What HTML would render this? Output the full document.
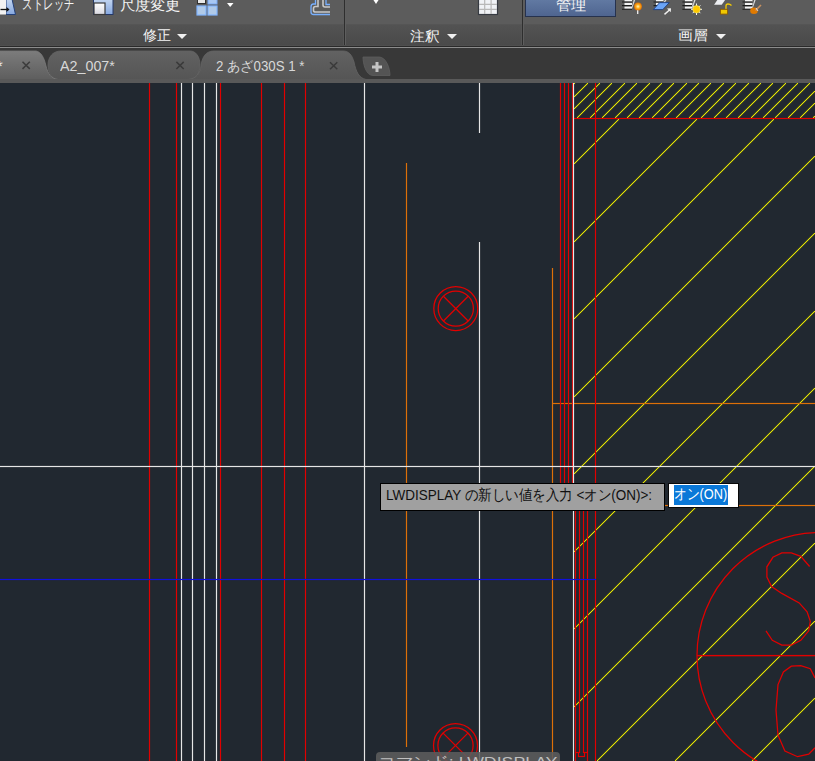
<!DOCTYPE html>
<html><head><meta charset="utf-8"><style>
*{margin:0;padding:0;box-sizing:border-box}
html,body{width:815px;height:761px;overflow:hidden;background:#212830;font-family:"Liberation Sans",sans-serif}
.abs{position:absolute}
#ribbon{position:absolute;left:0;top:0;width:815px;height:45px;background:#5c5c5c}
#rtitle{position:absolute;left:0;top:24px;width:815px;height:21px;background:linear-gradient(#535353,#4a4a4a)}
.tb{position:absolute;top:24px;height:21px;border:1px solid #555;border-bottom:none}
.sep{position:absolute;top:0;width:1px;height:45px;background:#2e2e2e}
.sepl{position:absolute;top:23px;width:1px;height:22px;background:#5e5e5e}
.rt{position:absolute;color:#f0f0f0;font-size:14px;line-height:16px;white-space:nowrap}
.tri{position:absolute;width:0;height:0;border-left:5px solid transparent;border-right:5px solid transparent;border-top:5px solid #f0f0f0}
#tabbar{position:absolute;left:0;top:45px;width:815px;height:38px;background:#383838}
.tt{position:absolute;color:#d6d6d6;font-size:14px;line-height:16px;white-space:nowrap}
.x{position:absolute;color:#2e2e2e;font-size:13px;font-weight:bold;line-height:13px}
#draw{position:absolute;left:0;top:0}
.lb{position:absolute;font-size:14px;line-height:16px;white-space:nowrap;transform-origin:0 0}
#tip{position:absolute;left:380px;top:483px;width:285px;height:28px;background:#a0a0a0;border:1px solid #000;color:#101010;font-size:14px;line-height:26px;padding-left:6px;white-space:nowrap}
#inp{position:absolute;left:668px;top:483px;width:71px;height:25px;background:#fff;border:1px solid #080808}
#sel{position:absolute;left:674px;top:485px;width:54px;height:20px;background:#0a78d8;color:#fff;font-size:14px;line-height:20px;white-space:nowrap;overflow:hidden}
#cmd{position:absolute;left:376px;top:752px;width:184px;height:20px;background:rgba(92,92,92,0.88);border-radius:4px;color:#c8c8c8;font-size:14px;line-height:20px;padding-left:4px;white-space:nowrap}
</style></head><body>
<svg id="draw" width="815" height="761" viewBox="0 0 815 761" shape-rendering="crispEdges" stroke-width="1"><g shape-rendering="geometricPrecision" stroke="#e8e800" stroke-width="2" stroke-opacity="0.28"><line x1="574.20" y1="83.80" x2="574.80" y2="83.20"/><line x1="574.20" y1="96.80" x2="587.80" y2="83.20"/><line x1="574.20" y1="108.80" x2="599.80" y2="83.20"/><line x1="577.20" y1="117.80" x2="611.80" y2="83.20"/><line x1="590.20" y1="117.80" x2="624.80" y2="83.20"/><line x1="602.20" y1="117.80" x2="636.80" y2="83.20"/><line x1="615.20" y1="117.80" x2="649.80" y2="83.20"/><line x1="627.20" y1="117.80" x2="661.80" y2="83.20"/><line x1="639.20" y1="117.80" x2="673.80" y2="83.20"/><line x1="652.20" y1="117.80" x2="686.80" y2="83.20"/><line x1="664.20" y1="117.80" x2="698.80" y2="83.20"/><line x1="676.20" y1="117.80" x2="710.80" y2="83.20"/><line x1="689.20" y1="117.80" x2="723.80" y2="83.20"/><line x1="701.20" y1="117.80" x2="735.80" y2="83.20"/><line x1="714.20" y1="117.80" x2="748.80" y2="83.20"/><line x1="726.20" y1="117.80" x2="760.80" y2="83.20"/><line x1="738.20" y1="117.80" x2="772.80" y2="83.20"/><line x1="751.20" y1="117.80" x2="785.80" y2="83.20"/><line x1="763.20" y1="117.80" x2="797.80" y2="83.20"/><line x1="775.20" y1="117.80" x2="809.80" y2="83.20"/><line x1="788.20" y1="117.80" x2="814.80" y2="91.20"/><line x1="800.20" y1="117.80" x2="814.80" y2="103.20"/><line x1="813.20" y1="117.80" x2="814.80" y2="116.20"/><line x1="574.20" y1="163.80" x2="618.80" y2="119.20"/><line x1="574.20" y1="241.80" x2="696.80" y2="119.20"/><line x1="574.20" y1="318.80" x2="773.80" y2="119.20"/><line x1="574.20" y1="396.80" x2="814.80" y2="156.20"/><line x1="574.20" y1="473.80" x2="814.80" y2="233.20"/><line x1="574.20" y1="551.80" x2="814.80" y2="311.20"/><line x1="574.20" y1="628.80" x2="814.80" y2="388.20"/><line x1="574.20" y1="706.80" x2="814.80" y2="466.20"/><line x1="597.20" y1="760.80" x2="814.80" y2="543.20"/><line x1="675.20" y1="760.80" x2="814.80" y2="621.20"/><line x1="752.20" y1="760.80" x2="814.80" y2="698.20"/></g><line x1="574.20" y1="83.80" x2="574.80" y2="83.20" stroke="#e8e800"/><line x1="574.20" y1="96.80" x2="587.80" y2="83.20" stroke="#e8e800"/><line x1="574.20" y1="108.80" x2="599.80" y2="83.20" stroke="#e8e800"/><line x1="577.20" y1="117.80" x2="611.80" y2="83.20" stroke="#e8e800"/><line x1="590.20" y1="117.80" x2="624.80" y2="83.20" stroke="#e8e800"/><line x1="602.20" y1="117.80" x2="636.80" y2="83.20" stroke="#e8e800"/><line x1="615.20" y1="117.80" x2="649.80" y2="83.20" stroke="#e8e800"/><line x1="627.20" y1="117.80" x2="661.80" y2="83.20" stroke="#e8e800"/><line x1="639.20" y1="117.80" x2="673.80" y2="83.20" stroke="#e8e800"/><line x1="652.20" y1="117.80" x2="686.80" y2="83.20" stroke="#e8e800"/><line x1="664.20" y1="117.80" x2="698.80" y2="83.20" stroke="#e8e800"/><line x1="676.20" y1="117.80" x2="710.80" y2="83.20" stroke="#e8e800"/><line x1="689.20" y1="117.80" x2="723.80" y2="83.20" stroke="#e8e800"/><line x1="701.20" y1="117.80" x2="735.80" y2="83.20" stroke="#e8e800"/><line x1="714.20" y1="117.80" x2="748.80" y2="83.20" stroke="#e8e800"/><line x1="726.20" y1="117.80" x2="760.80" y2="83.20" stroke="#e8e800"/><line x1="738.20" y1="117.80" x2="772.80" y2="83.20" stroke="#e8e800"/><line x1="751.20" y1="117.80" x2="785.80" y2="83.20" stroke="#e8e800"/><line x1="763.20" y1="117.80" x2="797.80" y2="83.20" stroke="#e8e800"/><line x1="775.20" y1="117.80" x2="809.80" y2="83.20" stroke="#e8e800"/><line x1="788.20" y1="117.80" x2="814.80" y2="91.20" stroke="#e8e800"/><line x1="800.20" y1="117.80" x2="814.80" y2="103.20" stroke="#e8e800"/><line x1="813.20" y1="117.80" x2="814.80" y2="116.20" stroke="#e8e800"/><line x1="574.20" y1="163.80" x2="618.80" y2="119.20" stroke="#e8e800"/><line x1="574.20" y1="241.80" x2="696.80" y2="119.20" stroke="#e8e800"/><line x1="574.20" y1="318.80" x2="773.80" y2="119.20" stroke="#e8e800"/><line x1="574.20" y1="396.80" x2="814.80" y2="156.20" stroke="#e8e800"/><line x1="574.20" y1="473.80" x2="814.80" y2="233.20" stroke="#e8e800"/><line x1="574.20" y1="551.80" x2="814.80" y2="311.20" stroke="#e8e800"/><line x1="574.20" y1="628.80" x2="814.80" y2="388.20" stroke="#e8e800"/><line x1="574.20" y1="706.80" x2="814.80" y2="466.20" stroke="#e8e800"/><line x1="597.20" y1="760.80" x2="814.80" y2="543.20" stroke="#e8e800"/><line x1="675.20" y1="760.80" x2="814.80" y2="621.20" stroke="#e8e800"/><line x1="752.20" y1="760.80" x2="814.80" y2="698.20" stroke="#e8e800"/><line x1="406.5" y1="163" x2="406.5" y2="747" stroke="#dd7008" stroke-width="3" stroke-opacity="0.09"/><line x1="406.5" y1="163" x2="406.5" y2="747" stroke="#dd7008"/><line x1="552.5" y1="268" x2="552.5" y2="761" stroke="#dd7008" stroke-width="3" stroke-opacity="0.09"/><line x1="552.5" y1="268" x2="552.5" y2="761" stroke="#dd7008"/><line x1="552" y1="403.5" x2="815" y2="403.5" stroke="#dd7008" stroke-width="3" stroke-opacity="0.09"/><line x1="552" y1="403.5" x2="815" y2="403.5" stroke="#dd7008"/><line x1="552" y1="505.5" x2="815" y2="505.5" stroke="#dd7008" stroke-width="3" stroke-opacity="0.09"/><line x1="552" y1="505.5" x2="815" y2="505.5" stroke="#dd7008"/><line x1="149.5" y1="83" x2="149.5" y2="761" stroke="#e20000" stroke-width="3" stroke-opacity="0.09"/><line x1="149.5" y1="83" x2="149.5" y2="761" stroke="#e20000"/><line x1="176.5" y1="83" x2="176.5" y2="761" stroke="#e20000" stroke-width="3" stroke-opacity="0.09"/><line x1="176.5" y1="83" x2="176.5" y2="761" stroke="#e20000"/><line x1="220.5" y1="83" x2="220.5" y2="761" stroke="#e20000" stroke-width="3" stroke-opacity="0.09"/><line x1="220.5" y1="83" x2="220.5" y2="761" stroke="#e20000"/><line x1="261.5" y1="83" x2="261.5" y2="761" stroke="#e20000" stroke-width="3" stroke-opacity="0.09"/><line x1="261.5" y1="83" x2="261.5" y2="761" stroke="#e20000"/><line x1="284.5" y1="83" x2="284.5" y2="761" stroke="#e20000" stroke-width="3" stroke-opacity="0.09"/><line x1="284.5" y1="83" x2="284.5" y2="761" stroke="#e20000"/><line x1="305.5" y1="83" x2="305.5" y2="761" stroke="#e20000" stroke-width="3" stroke-opacity="0.09"/><line x1="305.5" y1="83" x2="305.5" y2="761" stroke="#e20000"/><line x1="560.5" y1="83" x2="560.5" y2="497" stroke="#e20000" stroke-width="3" stroke-opacity="0.09"/><line x1="560.5" y1="83" x2="560.5" y2="497" stroke="#e20000"/><line x1="564.5" y1="83" x2="564.5" y2="497" stroke="#e20000" stroke-width="3" stroke-opacity="0.09"/><line x1="564.5" y1="83" x2="564.5" y2="497" stroke="#e20000"/><line x1="568.5" y1="83" x2="568.5" y2="497" stroke="#e20000" stroke-width="3" stroke-opacity="0.09"/><line x1="568.5" y1="83" x2="568.5" y2="497" stroke="#e20000"/><line x1="572.5" y1="83" x2="572.5" y2="497" stroke="#e20000" stroke-width="3" stroke-opacity="0.09"/><line x1="572.5" y1="83" x2="572.5" y2="497" stroke="#e20000"/><line x1="575.5" y1="497" x2="575.5" y2="761" stroke="#e20000" stroke-width="3" stroke-opacity="0.09"/><line x1="575.5" y1="497" x2="575.5" y2="761" stroke="#e20000"/><line x1="587.5" y1="497" x2="587.5" y2="761" stroke="#e20000" stroke-width="3" stroke-opacity="0.09"/><line x1="587.5" y1="497" x2="587.5" y2="761" stroke="#e20000"/><line x1="579.5" y1="497" x2="579.5" y2="753" stroke="#e20000" stroke-width="3" stroke-opacity="0.09"/><line x1="579.5" y1="497" x2="579.5" y2="753" stroke="#e20000"/><line x1="583.5" y1="497" x2="583.5" y2="753" stroke="#e20000" stroke-width="3" stroke-opacity="0.09"/><line x1="583.5" y1="497" x2="583.5" y2="753" stroke="#e20000"/><line x1="575" y1="752.5" x2="580" y2="752.5" stroke="#e20000" stroke-width="3" stroke-opacity="0.09"/><line x1="575" y1="752.5" x2="580" y2="752.5" stroke="#e20000"/><line x1="583" y1="752.5" x2="588" y2="752.5" stroke="#e20000" stroke-width="3" stroke-opacity="0.09"/><line x1="583" y1="752.5" x2="588" y2="752.5" stroke="#e20000"/><line x1="578.5" y1="752" x2="578.5" y2="757" stroke="#e20000" stroke-width="3" stroke-opacity="0.09"/><line x1="578.5" y1="752" x2="578.5" y2="757" stroke="#e20000"/><line x1="584.5" y1="752" x2="584.5" y2="757" stroke="#e20000" stroke-width="3" stroke-opacity="0.09"/><line x1="584.5" y1="752" x2="584.5" y2="757" stroke="#e20000"/><line x1="578" y1="756.5" x2="585" y2="756.5" stroke="#e20000" stroke-width="3" stroke-opacity="0.09"/><line x1="578" y1="756.5" x2="585" y2="756.5" stroke="#e20000"/><line x1="595.5" y1="83" x2="595.5" y2="761" stroke="#e20000" stroke-width="3" stroke-opacity="0.09"/><line x1="595.5" y1="83" x2="595.5" y2="761" stroke="#e20000"/><line x1="573" y1="118.5" x2="815" y2="118.5" stroke="#e20000" stroke-width="3" stroke-opacity="0.09"/><line x1="573" y1="118.5" x2="815" y2="118.5" stroke="#e20000"/><line x1="181.5" y1="83" x2="181.5" y2="761" stroke="#e6e6e6" stroke-width="3" stroke-opacity="0.09"/><line x1="181.5" y1="83" x2="181.5" y2="761" stroke="#e6e6e6"/><line x1="192.5" y1="83" x2="192.5" y2="761" stroke="#e6e6e6" stroke-width="3" stroke-opacity="0.09"/><line x1="192.5" y1="83" x2="192.5" y2="761" stroke="#e6e6e6"/><line x1="204.5" y1="83" x2="204.5" y2="761" stroke="#e6e6e6" stroke-width="3" stroke-opacity="0.09"/><line x1="204.5" y1="83" x2="204.5" y2="761" stroke="#e6e6e6"/><line x1="216.5" y1="83" x2="216.5" y2="761" stroke="#e6e6e6" stroke-width="3" stroke-opacity="0.09"/><line x1="216.5" y1="83" x2="216.5" y2="761" stroke="#e6e6e6"/><line x1="364.5" y1="83" x2="364.5" y2="761" stroke="#e6e6e6" stroke-width="3" stroke-opacity="0.09"/><line x1="364.5" y1="83" x2="364.5" y2="761" stroke="#e6e6e6"/><line x1="479.5" y1="83" x2="479.5" y2="133" stroke="#e6e6e6" stroke-width="3" stroke-opacity="0.09"/><line x1="479.5" y1="83" x2="479.5" y2="133" stroke="#e6e6e6"/><line x1="479.5" y1="242" x2="479.5" y2="761" stroke="#e6e6e6" stroke-width="3" stroke-opacity="0.09"/><line x1="479.5" y1="242" x2="479.5" y2="761" stroke="#e6e6e6"/><line x1="573.5" y1="83" x2="573.5" y2="761" stroke="#e6e6e6" stroke-width="3" stroke-opacity="0.09"/><line x1="573.5" y1="83" x2="573.5" y2="761" stroke="#e6e6e6"/><line x1="0" y1="466.5" x2="815" y2="466.5" stroke="#e6e6e6" stroke-width="3" stroke-opacity="0.09"/><line x1="0" y1="466.5" x2="815" y2="466.5" stroke="#e6e6e6"/><g shape-rendering="geometricPrecision" stroke-width="1.25"><circle cx="455.8" cy="308.6" r="22" stroke="#e20000" fill="none"/><circle cx="455.8" cy="308.6" r="17.6" stroke="#e20000" fill="none"/><line x1="443.43" y1="296.23" x2="468.17" y2="320.97" stroke="#e20000"/><line x1="443.43" y1="320.97" x2="468.17" y2="296.23" stroke="#e20000"/></g><g shape-rendering="geometricPrecision" stroke-width="1.25"><circle cx="455.5" cy="745.5" r="22" stroke="#e20000" fill="none"/><circle cx="455.5" cy="745.5" r="17.6" stroke="#e20000" fill="none"/><line x1="443.13" y1="733.13" x2="467.87" y2="757.87" stroke="#e20000"/><line x1="443.13" y1="757.87" x2="467.87" y2="733.13" stroke="#e20000"/></g><g shape-rendering="geometricPrecision" stroke-width="1.25"><circle cx="820" cy="655.5" r="123" stroke="#e20000" fill="none"/><line x1="697" y1="655.5" x2="815" y2="655.5" stroke="#e20000" stroke-width="3" stroke-opacity="0.09"/><line x1="697" y1="655.5" x2="815" y2="655.5" stroke="#e20000"/><polyline fill="none" stroke="#e20000" points="809.6,566.5 800.8,556.4 791.3,552.9 781.8,552.9 772.9,557.3 766.9,566.8 766.9,577 771.6,586.5 781.8,593.4 799.2,602.9 807.1,611.8 810.3,621.3 808.7,630.8 800.8,640.3 791.3,645 781.8,645 772.3,640.3 766,630.8"/><polyline fill="none" stroke="#e20000" points="815,678 810.3,668.7 800.8,665.6 791.3,666.2 783.4,671.9 778,684.6 776,709.9 778,735.2 784.9,751 797.6,756.7 808.7,754.2 815,747.8"/></g><line x1="0" y1="579.5" x2="596" y2="579.5" stroke="#1010dc" stroke-width="3" stroke-opacity="0.09"/><line x1="0" y1="579.5" x2="596" y2="579.5" stroke="#1010dc"/></svg>
<div id="ribbon">
  <div id="rtitle"></div>
  <div class="tb" style="left:-2px;width:346px"></div>
  <div class="tb" style="left:345px;width:177px"></div>
  <div class="tb" style="left:523px;width:295px"></div>
  <div class="sep" style="left:344px"></div>
  <div class="sep" style="left:522px"></div>
  <div class="abs" style="left:345px;top:0;width:1px;height:45px;background:#5e5e5e"></div>
  <div class="abs" style="left:523px;top:0;width:1px;height:45px;background:#5e5e5e"></div>
  <svg class="abs" style="left:0;top:0" width="815" height="23" viewBox="0 0 815 23">
   <defs>
    <linearGradient id="bl" x1="0" y1="0" x2="0" y2="1"><stop offset="0" stop-color="#c4d6f0"/><stop offset="1" stop-color="#86a8e0"/></linearGradient>
    <linearGradient id="wh" x1="0" y1="0" x2="0" y2="1"><stop offset="0" stop-color="#ffffff"/><stop offset="1" stop-color="#d8d8e0"/></linearGradient>
    <radialGradient id="bulb"><stop offset="0" stop-color="#fff6c0"/><stop offset="0.5" stop-color="#ffb020"/><stop offset="1" stop-color="#e07000"/></radialGradient>
   </defs>
   <!-- stretch -->
   <path d="M6,-1 L12,-1 L15.5,14.5 L6,14.5 Z" fill="url(#bl)" stroke="#23407a" stroke-width="1"/>
   <rect x="-1" y="-1" width="7" height="15.5" fill="#f2f2f2"/>
   <path d="M0.5,9.5 H8.5" stroke="#111" stroke-width="1.3"/>
   <path d="M6.5,7 L9.5,9.5 L6.5,12 Z" fill="#111"/>
   <!-- scale -->
   <rect x="93.5" y="-1" width="19.5" height="15.5" fill="url(#bl)" stroke="#24386a" stroke-width="1"/>
   <rect x="94" y="3" width="11" height="11.5" fill="url(#wh)" stroke="#3a3a3a" stroke-width="1.2"/>
   <!-- array -->
   <rect x="197.5" y="-2" width="8" height="5.5" fill="#e8e8e8" stroke="#303030" stroke-width="1"/>
   <rect x="208" y="-1" width="9" height="5" fill="#a8c8f4" stroke="#78aaf8" stroke-width="1"/>
   <rect x="197" y="6" width="9" height="9" fill="#b0cae8" stroke="#80b4ff" stroke-width="1.2"/>
   <rect x="208" y="6" width="9" height="9" fill="#b0cae8" stroke="#80b4ff" stroke-width="1.2"/>
   <path d="M227,3 H233.5 L230.2,7 Z" fill="#ffffff"/>
   <!-- L icon -->
   <path d="M315.5,-1 V4 H313.5 Q311,4 311,7 V12 Q311,14.5 313.5,14.5 H330" fill="none" stroke="#78b0ff" stroke-width="1.3"/>
   <path d="M326,-1 V4.5 H330" fill="none" stroke="#78b0ff" stroke-width="1.3"/>
   <path d="M318,-1 V6.5 H315.5 Q313.5,6.5 313.5,8.5 V10.5 Q313.5,12 315.5,12 H330" fill="none" stroke="#c8c8c8" stroke-width="1.6"/>
   <path d="M323,-1 V5 Q323,7 325,7 H330" fill="none" stroke="#c8c8c8" stroke-width="1.6"/>
   <!-- dropdown -->
   <path d="M372.8,-1 H379.2 L376,4 Z" fill="#ffffff"/>
   <!-- table -->
   <rect x="478.5" y="-1" width="19" height="15.5" fill="#f0f2f6" stroke="#363a42" stroke-width="1.2"/>
   <path d="M484.7,0 V14 M491.1,0 V14 M479,4.4 H497 M479,9.3 H497" stroke="#b8b8b8" stroke-width="1.2"/>
   <!-- layer icons -->
   <rect x="624.5" y="-1" width="7.5" height="2.6" fill="#f2f2f2"/><rect x="624.5" y="2.8" width="7.5" height="2.4" fill="#f2f2f2"/><rect x="624.5" y="6.4" width="7.5" height="2.4" fill="#f2f2f2"/><path d="M622,2 H632 M622,5.6 H632 M622,9.2 H632" stroke="#1c1c1c" stroke-width="1.1"/><path d="M632,8.7 L635.5,-1 L634,-1 L632,6.199999999999999Z" fill="#dcdcdc"/>
   <circle cx="638" cy="6.5" r="3.9" fill="url(#bulb)"/>
   <path d="M637.7,10.2 V14" stroke="#f0f0f0" stroke-width="1.3"/>
   <rect x="656.0" y="-1" width="7.5" height="2.6" fill="#f2f2f2"/><rect x="656.0" y="2.8" width="7.5" height="2.4" fill="#f2f2f2"/><path d="M653.5,2 H663.5 M653.5,5.6 H663.5" stroke="#1c1c1c" stroke-width="1.1"/><path d="M663.5,5.1 L667.0,-1 L665.5,-1 L663.5,2.5999999999999996Z" fill="#dcdcdc"/>
   <path d="M653.3,9.6 L662.8,9.6 L669.3,2.6 L659.7,2.6 Z" fill="#6aa4f8" stroke="#1e3e80" stroke-width="0.9"/>
   <path d="M664.5,14.4 L670.3,9.3" stroke="#f0f0f0" stroke-width="1.4"/>
   <path d="M667,8.6 L671,8.3 L670.7,12.3 Z" fill="#f0f0f0"/>
   <rect x="684.9" y="-1" width="7.5" height="2.6" fill="#f2f2f2"/><rect x="684.9" y="2.8" width="7.5" height="2.4" fill="#f2f2f2"/><rect x="684.9" y="6.4" width="7.5" height="2.4" fill="#f2f2f2"/><path d="M682.4,2 H692.4 M682.4,5.6 H692.4 M682.4,9.2 H692.4" stroke="#1c1c1c" stroke-width="1.1"/><path d="M692.4,8.7 L695.9,-1 L694.4,-1 L692.4,6.199999999999999Z" fill="#dcdcdc"/>
   <g stroke="#f4f4f4" stroke-width="1"><path d="M696.5,3.5 V15 M691,9.3 H702 M692.6,5.4 L700.4,13.2 M700.4,5.4 L692.6,13.2"/></g>
   <circle cx="696.5" cy="9.3" r="3.7" fill="#ffc800" stroke="#f8e860" stroke-width="0.6"/>
   <path d="M714.1,4.8 L721.7,4.8 L725.8,-1 L718,-1 Z" fill="#eceef2"/>
   <path d="M726,9 V6 Q726,4 728,4 Q730,4 731.5,5.5" fill="none" stroke="#f4cc00" stroke-width="1.3"/>
   <rect x="720.4" y="9.3" width="7.2" height="4.8" fill="#f0c800" stroke="#8a5a00" stroke-width="0.9"/>
   <rect x="745.0" y="-1" width="7.5" height="2.6" fill="#f2f2f2"/><rect x="745.0" y="2.8" width="7.5" height="2.4" fill="#f2f2f2"/><rect x="745.0" y="6.4" width="7.5" height="2.4" fill="#f2f2f2"/><path d="M742.5,2 H752.5 M742.5,5.6 H752.5 M742.5,9.2 H752.5" stroke="#1c1c1c" stroke-width="1.1"/><path d="M752.5,8.7 L756.0,-1 L754.5,-1 L752.5,6.199999999999999Z" fill="#dcdcdc"/>
   <ellipse cx="754" cy="10.8" rx="3.8" ry="3.3" fill="#e07a00"/>
   <path d="M755.5,10.5 L761,5" stroke="#c89060" stroke-width="1.6"/>
   <path d="M756,8 L758,11" stroke="#f0f0f0" stroke-width="0.8"/>
  </svg>
  <div class="tri" style="left:177px;top:34px"></div>
  <div class="tri" style="left:447px;top:34px"></div>
  <div class="tri" style="left:716px;top:34px"></div>
  <div class="abs" style="left:525px;top:-1px;width:91px;height:18px;background:linear-gradient(#6179a2,#4f6590);border:1px solid #26324e"></div>
</div>
<div class="abs" style="left:0;top:45px;width:815px;height:1px;background:#4f4f4f"></div><div class="abs" style="left:0;top:46px;width:815px;height:1px;background:#2a2a2a"></div>
<div class="abs" style="left:0;top:47px;width:815px;height:1px;background:#8c8c8c"></div>
<div id="tabbar" style="top:48px;height:35px"></div>
<svg class="abs" style="left:0;top:0" width="815" height="83" viewBox="0 0 815 83">
<defs>
<linearGradient id="gi" x1="0" y1="0" x2="0" y2="1"><stop offset="0" stop-color="#626262"/><stop offset="1" stop-color="#555555"/></linearGradient>
<linearGradient id="ga" x1="0" y1="0" x2="0" y2="1"><stop offset="0" stop-color="#7c7c7c"/><stop offset="1" stop-color="#5e5e5e"/></linearGradient>
</defs>
<path d="M56,79.5 C50,77 48,71 48,65 C48,57 53,51 61,51 L190,51 C196,51 200,57 200,65 C200,72 197,77 192,79.5 Z" fill="url(#gi)" stroke="#646464" stroke-width="0.8"/>
<path d="M188,79.5 C197,78.5 200,73 201,66 C202,58 205,51 214,51 L343,51 C349,51 352,55 354,62 C356,72 359,78 366,79.5 Z" fill="url(#gi)" stroke="#646464" stroke-width="0.8"/>
<path d="M-5,51 L36,51 C41,52 44,57 46,66 C48,74 51,78.5 58,79.5 L-5,79.5 Z" fill="url(#ga)" stroke="#7a7a7a" stroke-width="0.8"/>
<path d="M363,57 L379,57 C386,57 390,68 390,75.5 L373,75.5 C366,75.5 363,64 363,57 Z" fill="#545454" stroke="#5e5e5e" stroke-width="0.8"/>
<rect x="372" y="65.5" width="10" height="3" fill="#c4c4c4"/>
<rect x="375.5" y="62" width="3" height="10" fill="#c4c4c4"/>
<g stroke="#363636" stroke-width="1.5" stroke-opacity="0.9">
<path d="M22.5,61.8 L29.8,68.9 M29.8,61.8 L22.5,68.9"/>
<path d="M176.4,61.9 L183.7,69 M183.7,61.9 L176.4,69"/>
<path d="M330,62.2 L337.3,69.3 M337.3,62.2 L330,69.3"/>
</g>
</svg>
<div class="abs" style="left:0;top:79px;width:815px;height:4px;background:#595959"></div>
<div id="tip"></div>
<div id="inp"></div>
<div id="sel"></div>
<div id="cmd"></div><div class="lb" style="left:22.05px;top:-4.70px;color:#f4f4f4;font-size:14px;line-height:16px;transform:scale(0.7529,1.100)">ストレッチ</div>
<div class="lb" style="left:119.52px;top:-3.85px;color:#f4f4f4;font-size:14px;line-height:16px;transform:scale(1.0815,1.050)">尺度変更</div>
<div class="lb" style="left:143.00px;top:26.80px;color:#f4f4f4;font-size:14px;line-height:16px;transform:scale(1.0036,1.000)">修正</div>
<div class="lb" style="left:409.90px;top:27.70px;color:#f4f4f4;font-size:14px;line-height:16px;transform:scale(1.0481,1.000)">注釈</div>
<div class="lb" style="left:677.54px;top:26.70px;color:#f4f4f4;font-size:14px;line-height:16px;transform:scale(1.0577,1.000)">画層</div>
<div class="lb" style="left:555.72px;top:-2.70px;color:#f4f4f4;font-size:14px;line-height:16px;transform:scale(1.0846,1.000)">管理</div>
<div class="lb" style="left:60.20px;top:58.00px;color:#d8d8d8;font-size:14px;line-height:16px;transform:scale(1.0208,1.000)">A2_007*</div>
<div class="lb" style="left:215.75px;top:57.90px;color:#d8d8d8;font-size:14px;line-height:16px;transform:scale(0.9478,1.000)">2 あざ030S 1 *</div>
<div class="lb" style="left:385.70px;top:485.80px;color:#101010;font-size:15px;line-height:17px;transform:scale(0.8993,1.000)">LWDISPLAY の新しい値を入力 &lt;オン(ON)&gt;:</div>
<div class="lb" style="left:674.05px;top:484.80px;color:#ffffff;font-size:15px;line-height:17px;transform:scale(0.8508,1.000)">オン(ON)</div>
<div class="lb" style="left:377.64px;top:752.50px;color:#c0c0c0;font-size:15px;line-height:17px;transform:scale(1.1800,1.000)">コマンド: LWDISPLAY</div>
<div class="lb" style="left:-3.75px;top:57.50px;color:#f4f4f4;font-size:14px;line-height:16px;transform:scale(1.2500,1.000)">*</div>
</body></html>
